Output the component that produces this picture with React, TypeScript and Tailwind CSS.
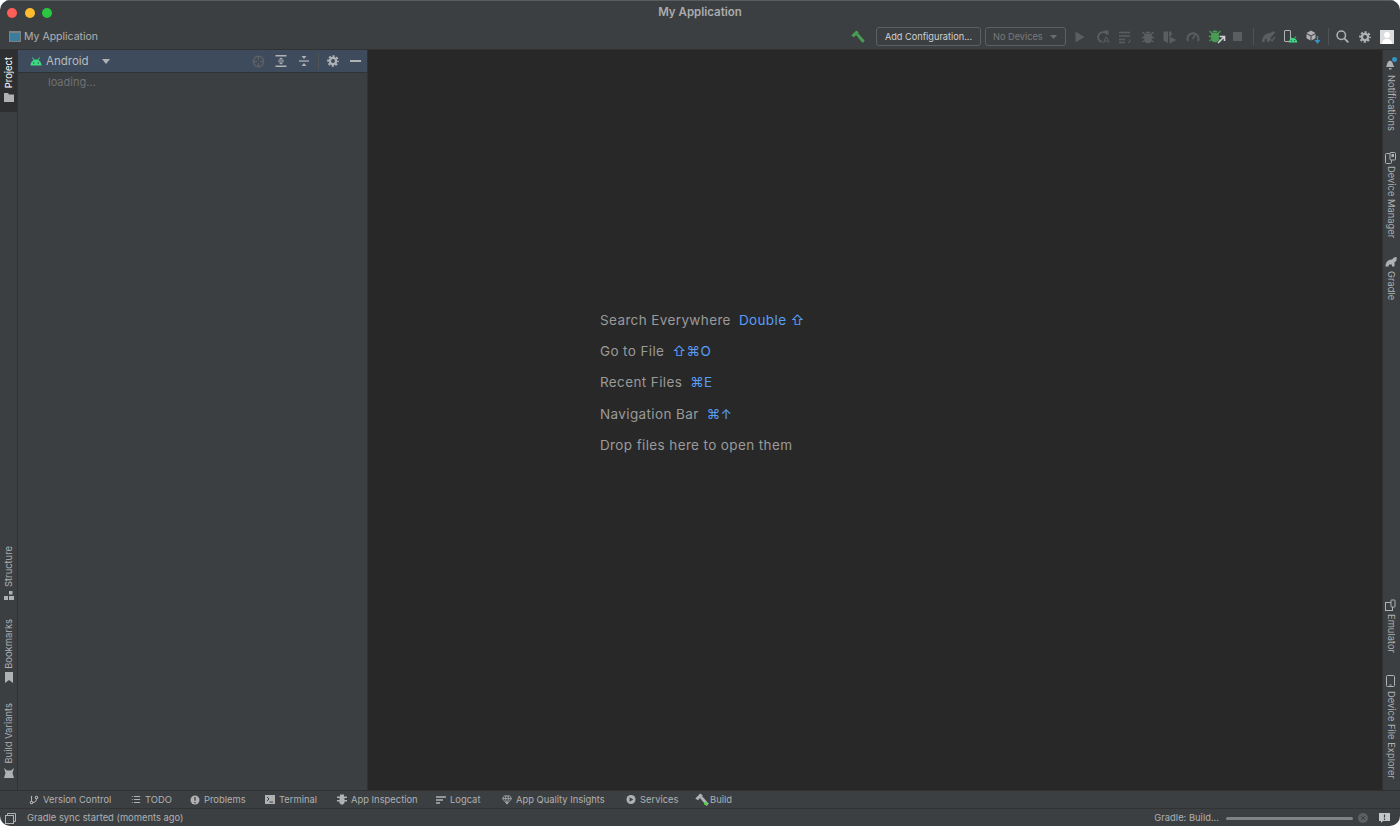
import React from 'react';
import { GitBranch, List } from 'lucide-react';

const font = 'font-["Inter","Liberation_Sans",sans-serif]';

const Hammer = ({ color = '#499c54' }: { color?: string }) => (
  <svg width="14" height="14" viewBox="0 0 14 14">
    <path d="M0.3 5.5 L5.2 0.5 L7.8 2.3 L3 7.3 Z" fill={color} />
    <path d="M4.8 4.8 L6.8 2.8 L13.7 10.8 L11.5 13 Z" fill={color} />
  </svg>
);

const AndroidHead = ({ color = '#3ddc84', w = 12, h = 9 }: { color?: string; w?: number; h?: number }) => (
  <svg width={w} height={h} viewBox="0 0 12 9">
    <path d="M0.5 8.5 C0.7 5 3 2.6 6 2.6 C9 2.6 11.3 5 11.5 8.5 Z" fill={color} />
    <path d="M2.5 0.5 L4 3 M9.5 0.5 L8 3" stroke={color} strokeWidth="1" />
    <circle cx="3.8" cy="6" r="0.7" fill="#3c3f41" />
    <circle cx="8.2" cy="6" r="0.7" fill="#3c3f41" />
  </svg>
);

const Bug = ({ color = '#5b5d5f' }: { color?: string }) => (
  <svg width="14" height="14" viewBox="0 0 14 14">
    <path d="M3.2 4 H10.8 V10 C10.8 12 8.8 13.3 7 13.3 C5.2 13.3 3.2 12 3.2 10 Z M4.5 2.5 C5 1 9 1 9.5 2.5 V3.5 H4.5 Z" fill={color} />
    <path d="M1.5 2 L4 4.5 M12.5 2 L10 4.5 M0.8 7.5 H4 M13.2 7.5 H10 M1.5 12 L4 10 M12.5 12 L10 10" stroke={color} strokeWidth="1.4" />
  </svg>
);

const Gear = ({ size = 13 }: { size?: number }) => (
  <svg width={size} height={size} viewBox="0 0 14 14">
    <circle cx="7" cy="7" r="3.6" fill="none" stroke="#afb1b3" strokeWidth="2.6" />
    <circle cx="7" cy="7" r="5.7" fill="none" stroke="#afb1b3" strokeWidth="2.2" strokeDasharray="2.6 1.88" strokeDashoffset="1.3" />
  </svg>
);

const Slot = ({ children }: { children: React.ReactNode }) => (
  <div className="flex w-[22.5px] justify-center">{children}</div>
);

const ToolbarIcons = () => (
  <div className="flex items-center">
    <div className="w-[3px]" />
    <Slot>
      <svg width="10" height="12" viewBox="0 0 10 12"><path d="M0.5 0.5 L9.5 6 L0.5 11.5 Z" fill="#5b5d5f" /></svg>
    </Slot>
    <Slot>
      <svg width="14" height="14" viewBox="0 0 14 14">
        <path d="M11 4 A5 5 0 1 0 6 12" fill="none" stroke="#5b5d5f" strokeWidth="1.7" />
        <path d="M7.5 0.5 L12.5 0.5 L12.5 5.5 Z" fill="#5b5d5f" />
        <path d="M7.5 13 L9.8 7 H10.6 L13 13 M8.5 11 H12" fill="none" stroke="#5b5d5f" strokeWidth="1" />
      </svg>
    </Slot>
    <Slot>
      <svg width="14" height="14" viewBox="0 0 14 14">
        <path d="M1 2.5 H12 M1 6 H12 M1 9.5 H7 M1 12.5 H7" stroke="#5b5d5f" strokeWidth="1.6" />
        <path d="M11 9.5 L12 11.5 L10 13" fill="none" stroke="#5b5d5f" strokeWidth="1" />
      </svg>
    </Slot>
    <Slot><Bug /></Slot>
    <Slot>
      <svg width="14" height="14" viewBox="0 0 14 14">
        <path d="M0.5 1.5 H5 V12.5 H3.5 L0.5 10.5 Z" fill="#5b5d5f" />
        <path d="M6 1.5 H8.5 V5.5 L6 7 Z" fill="#5b5d5f" />
        <path d="M6.5 6.5 L13.5 10 L6.5 13.5 Z" fill="#5b5d5f" />
      </svg>
    </Slot>
    <Slot>
      <svg width="14" height="14" viewBox="0 0 14 14">
        <path d="M2 11 A5.5 5.5 0 1 1 12 11" fill="none" stroke="#5b5d5f" strokeWidth="2" />
        <path d="M6.5 9 L9 5" stroke="#5b5d5f" strokeWidth="1.5" />
      </svg>
    </Slot>
    <Slot>
      <div className="relative h-[15px] w-[14px]">
        <Bug color="#499c54" />
        <svg className="absolute -right-1 bottom-0" width="9" height="9" viewBox="0 0 9 9">
          <path d="M1 8 L7 2 M3 1.5 H7.5 V6" fill="none" stroke="#cfd0d1" strokeWidth="1.6" />
        </svg>
      </div>
    </Slot>
    <Slot><div className="h-[9px] w-[9px] bg-[#5b5d5f]" /></Slot>
    <div className="ml-[4px] mr-[3px] h-[17px] w-px bg-[#505254]" />
    <Slot>
      <svg width="15" height="13" viewBox="0 0 15 13">
        <path d="M1 12 C1 6 5 3 9 3 L13 1 L14 3 L10 7 L8 12 H6 L6 9 H4 L3.5 12 Z" fill="#5b5d5f" />
        <path d="M9 9 L11 11 L14 7" fill="none" stroke="#5b5d5f" strokeWidth="1.3" />
      </svg>
    </Slot>
    <Slot>
      <div className="relative h-[13px] w-[14px]">
        <div className="h-[12px] w-[7px] rounded-[1px] border border-[#afb1b3]" />
        <div className="absolute bottom-0 right-0"><AndroidHead w={10} h={7} /></div>
      </div>
    </Slot>
    <Slot>
      <div className="relative h-[14px] w-[14px]">
        <svg className="absolute left-0 top-0" width="10" height="11" viewBox="0 0 10 11">
          <path d="M5 0.5 L9.5 3 L5 5.5 L0.5 3 Z" fill="#afb1b3" />
          <path d="M0.5 4 L4.5 6.3 V10.5 L0.5 8.2 Z M9.5 4 L5.5 6.3 V10.5 L9.5 8.2 Z" fill="#afb1b3" />
        </svg>
        <svg className="absolute -right-[1px] bottom-0" width="7" height="8" viewBox="0 0 7 8">
          <path d="M3.5 0 V5" stroke="#3592c4" strokeWidth="1.4" />
          <path d="M0.5 4 H6.5 L3.5 8 Z" fill="#3592c4" />
        </svg>
      </div>
    </Slot>
    <div className="ml-[3.5px] mr-[2px] h-[17px] w-px bg-[#505254]" />
    <Slot>
      <svg width="13" height="13" viewBox="0 0 13 13">
        <circle cx="5.3" cy="5.3" r="4.2" fill="none" stroke="#afb1b3" strokeWidth="1.5" />
        <path d="M8.3 8.3 L12.3 12.3" stroke="#afb1b3" strokeWidth="1.8" />
      </svg>
    </Slot>
    <Slot><Gear size={12} /></Slot>
    <Slot>
      <svg width="14" height="14" viewBox="0 0 14 14">
        <rect width="14" height="14" fill="#dcdcdc" />
        <circle cx="7" cy="5" r="2.9" fill="#ffffff" />
        <path d="M2 14 C2 10 4.5 9 7 9 C9.5 9 12 10 12 14 Z" fill="#ffffff" />
      </svg>
    </Slot>
  </div>
);

const VerticalLabel = ({ children, left, active }: { children: React.ReactNode; left?: boolean; active?: boolean }) => (
  <span
    className={`[writing-mode:vertical-rl] whitespace-nowrap text-[9.4px] leading-[18px] ${left ? 'rotate-180' : ''} ${active ? 'text-white' : 'text-[#afb1b3]'}`}
  >
    {children}
  </span>
);

const LeftStripe = () => (
  <div className="flex w-[18px] shrink-0 flex-col justify-between border-r border-[#323232] bg-[#3c3f41] pb-[12px]">
    <div className="flex h-[62px] flex-col items-center gap-[5px] bg-[#2d2f30] pt-[7px]">
      <VerticalLabel left active>Project</VerticalLabel>
      <svg width="10" height="9" viewBox="0 0 10 9"><path d="M0 0 H4 L5 1.5 H10 V9 H0 Z" fill="#afb1b3" /></svg>
    </div>
    <div className="flex flex-col items-center">
      <VerticalLabel left>Structure</VerticalLabel>
      <svg className="mt-[4px]" width="10" height="9" viewBox="0 0 10 9">
        <rect x="0" y="5" width="4" height="4" fill="#afb1b3" />
        <rect x="5" y="5" width="5" height="4" fill="#afb1b3" />
        <rect x="5" y="0" width="3.5" height="3.5" fill="#afb1b3" />
      </svg>
      <div className="mt-[19px] flex"><VerticalLabel left>Bookmarks</VerticalLabel></div>
      <svg className="mt-[4px]" width="8" height="11" viewBox="0 0 8 11"><path d="M0 0 H8 V11 L4 8 L0 11 Z" fill="#afb1b3" /></svg>
      <div className="mt-[20px] flex"><VerticalLabel left>Build Variants</VerticalLabel></div>
      <svg className="mt-[4px] rotate-180" width="10" height="10" viewBox="0 0 10 10">
        <path d="M0 0 H10 L8.5 5 L10 10 L7 7.5 H3 L0 10 L1.5 5 Z" fill="#afb1b3" />
      </svg>
    </div>
  </div>
);

const RightStripe = () => (
  <div className="flex w-[18px] shrink-0 flex-col justify-between border-l border-[#323232] bg-[#3c3f41] pb-[11px] pr-[2px] pt-[8px]">
    <div className="flex flex-col items-center">
      <div className="relative flex">
        <svg width="11" height="12" viewBox="0 0 11 12">
          <path d="M1 9 C2 8 2 3 5 2.5 C8 3 8 8 9.5 9 Z" fill="#afb1b3" />
          <rect x="4" y="10" width="2.5" height="1.5" fill="#afb1b3" />
        </svg>
        <div className="absolute -right-[1px] -top-[1px] h-[5px] w-[5px] rounded-full bg-[#3592c4]" />
      </div>
      <div className="mt-[5px] flex"><VerticalLabel>Notifications</VerticalLabel></div>
      <svg className="mt-[21px]" width="11" height="12" viewBox="0 0 11 12">
        <rect x="0.5" y="1.5" width="6" height="10" rx="1" fill="none" stroke="#afb1b3" />
        <rect x="5" y="0.5" width="5.5" height="7.5" rx="1" fill="#3c3f41" stroke="#afb1b3" />
        <rect x="6.5" y="2" width="2.5" height="3" fill="#afb1b3" />
      </svg>
      <div className="mt-[2px] flex"><VerticalLabel>Device Manager</VerticalLabel></div>
      <svg className="mt-[18px]" width="12" height="11" viewBox="0 0 12 11">
        <path d="M0.5 10.5 C0.5 6 3.5 3 7 3.5 L9 1.5 L11.7 1 L11.5 4.5 L9.5 6.5 V10.5 H7.2 L6.8 8.5 H4 L3.5 10.5 Z" fill="#afb1b3" />
      </svg>
      <div className="mt-[4px] flex"><VerticalLabel>Gradle</VerticalLabel></div>
    </div>
    <div className="flex flex-col items-center">
      <svg width="11" height="12" viewBox="0 0 11 12">
        <rect x="0.5" y="3.5" width="7" height="8" fill="none" stroke="#afb1b3" />
        <rect x="6" y="1" width="4" height="7" rx="0.5" fill="#3c3f41" stroke="#afb1b3" />
      </svg>
      <div className="mt-[3px] flex"><VerticalLabel>Emulator</VerticalLabel></div>
      <svg className="mt-[22px]" width="9" height="12" viewBox="0 0 9 12">
        <rect x="0.5" y="0.5" width="8" height="11" rx="1" fill="none" stroke="#afb1b3" />
        <rect x="3.5" y="9.5" width="2" height="1" fill="#afb1b3" />
      </svg>
      <div className="mt-[4px] flex"><VerticalLabel>Device File Explorer</VerticalLabel></div>
    </div>
  </div>
);

const ProjectPanel = () => (
  <div className="flex w-[350px] shrink-0 flex-col border-r border-[#323232] bg-[#3c3f41]">
    <div className="flex h-[23px] items-center border-b border-[#323232] bg-[#3d4b5c] pl-[12px] pr-[6px]">
      <AndroidHead />
      <span className="ml-[4px] pt-[1px] text-[11.5px] text-[#bbbbbb]">Android</span>
      <svg className="ml-[13px]" width="8" height="5" viewBox="0 0 8 5"><path d="M0 0 H8 L4 5 Z" fill="#afb1b3" /></svg>
      <div className="ml-auto flex items-center">
        <svg width="13" height="13" viewBox="0 0 13 13">
          <circle cx="6.5" cy="6.5" r="5.2" fill="none" stroke="#5f6163" strokeWidth="1.4" />
          <path d="M6.5 1 V5 M6.5 8 V12 M1 6.5 H5 M8 6.5 H12" stroke="#5f6163" strokeWidth="1.3" />
        </svg>
        <svg className="ml-[10px]" width="12" height="12" viewBox="0 0 12 12">
          <path d="M0.5 0.75 H11.5 M0.5 11.25 H11.5" stroke="#afb1b3" strokeWidth="1.5" />
          <path d="M3.5 4.5 H8.5 L6 2.5 Z M3.5 7.5 H8.5 L6 9.5 Z" fill="#afb1b3" />
          <path d="M3 6 H9" stroke="#afb1b3" />
        </svg>
        <svg className="ml-[11px]" width="12" height="12" viewBox="0 0 12 12">
          <path d="M1 6 H11" stroke="#afb1b3" strokeWidth="1.3" />
          <path d="M3.5 1 H8.5 L6 4 Z M3.5 11 H8.5 L6 8 Z" fill="#afb1b3" />
        </svg>
        <div className="ml-[8px] mr-[8px] h-[17px] w-px bg-[#505254]" />
        <Gear size={12} />
        <div className="ml-[11px] h-[2px] w-[11px] bg-[#afb1b3]" />
      </div>
    </div>
    <div className="pl-[30px] pt-[1px] text-[11px] leading-[16px] text-[#6f7173]">loading...</div>
  </div>
);

const hints = [
  { label: 'Search Everywhere', keys: 'Double ⇧' },
  { label: 'Go to File', keys: '⇧⌘O' },
  { label: 'Recent Files', keys: '⌘E' },
  { label: 'Navigation Bar', keys: '⌘↑' },
  { label: 'Drop files here to open them', keys: '' },
];

const BottomTab = ({ icon, label, className }: { icon: React.ReactNode; label: string; className: string }) => (
  <div className={`flex items-center ${className}`}>
    <span className="mr-[4px] flex w-[10px] justify-center">{icon}</span>
    <span>{label}</span>
  </div>
);

export default function App() {
  return (
    <div className={`${font} h-[826px] w-[1400px] overflow-hidden bg-white`}>
      <div className="flex h-full flex-col overflow-hidden rounded-[10px] bg-[#3c3f41]">
        {/* Title bar */}
        <div className="relative flex h-[24px] shrink-0 items-center gap-[7.5px] border-t border-[#5a5c5e] pl-[7px]">
          <div className="h-[10px] w-[10px] rounded-full bg-[#ff5f57]" />
          <div className="h-[10px] w-[10px] rounded-full bg-[#febc2e]" />
          <div className="h-[10px] w-[10px] rounded-full bg-[#28c840]" />
          <span className="absolute inset-x-0 text-center text-[11.5px] font-semibold text-[#a9abad]">My Application</span>
        </div>

        {/* Toolbar */}
        <div className="flex h-[26px] shrink-0 items-center justify-between border-b border-[#323232] pl-[9px] pr-[1.5px]">
          <div className="flex items-center">
            <div className="h-[11px] w-[12px] border border-t-2 border-[#7c8083] bg-[#3c7d9c]" />
            <span className="ml-[3px] text-[10.5px] text-[#afb1b3]">My Application</span>
          </div>
          <div className="flex items-center">
            <Hammer />
            <div className="ml-[11px] flex h-[19px] w-[105px] items-center justify-center rounded-[3px] border border-[#5e6062] pt-[1px] text-[9.2px] text-[#d0d0d0]">
              Add Configuration...
            </div>
            <div className="ml-[4px] flex h-[19px] w-[81px] items-center justify-between rounded-[3px] border border-[#5e6062] pl-[7px] pr-[8px] pt-[1px] text-[9.2px] text-[#777a7c]">
              No Devices
              <svg width="7" height="4" viewBox="0 0 7 4"><path d="M0 0 H7 L3.5 4 Z" fill="#6a6c6e" /></svg>
            </div>
            <ToolbarIcons />
          </div>
        </div>

        {/* Main */}
        <div className="flex min-h-0 flex-1">
          <LeftStripe />
          <ProjectPanel />
          <div className="flex flex-1 flex-col justify-center bg-[#282828] pb-[75px] pl-[232px] text-[13.5px] tracking-[0.38px]">
            {hints.map((h) => (
              <div key={h.label} className="flex h-[31.4px] items-center">
                <span className="text-[#9a9a9a]">{h.label}</span>
                {h.keys && <span className="ml-[8px] text-[#589df6]">{h.keys}</span>}
              </div>
            ))}
          </div>
          <RightStripe />
        </div>

        {/* Bottom tool tabs */}
        <div className="flex h-[19px] shrink-0 items-center border-y border-[#323232] pl-[29px] pt-[1px] text-[9.4px] text-[#afb1b3]">
          <BottomTab className="w-[102px]" label="Version Control" icon={<GitBranch size={10} strokeWidth={2.5} />} />
          <BottomTab className="w-[59px]" label="TODO" icon={<List size={11} strokeWidth={2.5} />} />
          <BottomTab className="w-[75px]" label="Problems" icon={
            <svg width="10" height="10" viewBox="0 0 10 10"><circle cx="5" cy="5" r="4.5" fill="#afb1b3" /><path d="M5 2 V5.8 M5 7 V8.2" stroke="#3c3f41" strokeWidth="1.3" /></svg>
          } />
          <BottomTab className="w-[72px]" label="Terminal" icon={
            <svg width="10" height="9" viewBox="0 0 10 9"><rect width="10" height="9" fill="#afb1b3" /><path d="M2 2 L4 4 L2 6 M4.5 7 H8" fill="none" stroke="#3c3f41" /></svg>
          } />
          <BottomTab className="w-[99px]" label="App Inspection" icon={
            <svg width="10" height="11" viewBox="0 0 10 11"><path d="M3 0.5 H7 V2.5 H10 V4 H7.5 V6 H10 V7.5 H7.5 V9 L6 10.5 H4 L2.5 9 V7.5 H0 V6 H2.5 V4 H0 V2.5 H3 Z" fill="#afb1b3" /></svg>
          } />
          <BottomTab className="w-[66px]" label="Logcat" icon={
            <svg width="10" height="8" viewBox="0 0 10 8"><path d="M0 1 H10 M0 4 H7 M0 7 H4" stroke="#afb1b3" strokeWidth="1.4" /></svg>
          } />
          <BottomTab className="w-[124px]" label="App Quality Insights" icon={
            <svg width="11" height="10" viewBox="0 0 11 10"><path d="M2.5 0.5 H8.5 L10.5 3.5 L5.5 9.5 L0.5 3.5 Z M0.5 3.5 H10.5 M3.8 3.5 L5.5 9.5 L7.2 3.5 M3.8 3.5 L4.5 0.5 M7.2 3.5 L6.5 0.5" fill="none" stroke="#afb1b3" strokeWidth="0.9" /></svg>
          } />
          <BottomTab className="w-[70px]" label="Services" icon={
            <svg width="11" height="11" viewBox="0 0 11 11"><circle cx="5.5" cy="5.5" r="5" fill="#afb1b3" /><path d="M4 3 L8 5.5 L4 8 Z" fill="#3c3f41" /></svg>
          } />
          <div className="relative -ml-[1px] flex items-center">
            <Hammer color="#afb1b3" />
            <div className="absolute left-[9px] top-[9px] h-[3px] w-[3px] rounded-full bg-[#3ddc34]" />
            <span className="ml-[1px]">Build</span>
          </div>
        </div>

        {/* Status bar */}
        <div className="flex h-[17px] shrink-0 items-center pl-[5px] pr-[10px] pt-[1px] text-[9.4px] text-[#afb1b3]">
          <svg width="11" height="11" viewBox="0 0 11 11">
            <path d="M2.5 2.5 V0.5 H10.5 V8.5 H8.5" fill="none" stroke="#afb1b3" />
            <rect x="0.5" y="2.5" width="8" height="8" fill="none" stroke="#afb1b3" />
          </svg>
          <span className="ml-[11px]">Gradle sync started (moments ago)</span>
          <span className="ml-auto">Gradle: Build...</span>
          <div className="ml-[7px] h-[3px] w-[127px] rounded-full bg-[#808284]" />
          <div className="ml-[5px] flex h-[10px] w-[10px] items-center justify-center rounded-full bg-[#5d5f61]">
            <svg width="6" height="6" viewBox="0 0 6 6"><path d="M1 1 L5 5 M5 1 L1 5" stroke="#3c3f41" strokeWidth="1" /></svg>
          </div>
          <svg className="ml-[11px]" width="11" height="10" viewBox="0 0 11 10">
            <path d="M0 0 H11 V8 H4 L2 10 V8 H0 Z" fill="#c4c6c8" />
            <path d="M5.5 1.5 V4.5 M5.5 5.5 V7" stroke="#3c3f41" strokeWidth="1.2" />
          </svg>
        </div>
      </div>
    </div>
  );
}
